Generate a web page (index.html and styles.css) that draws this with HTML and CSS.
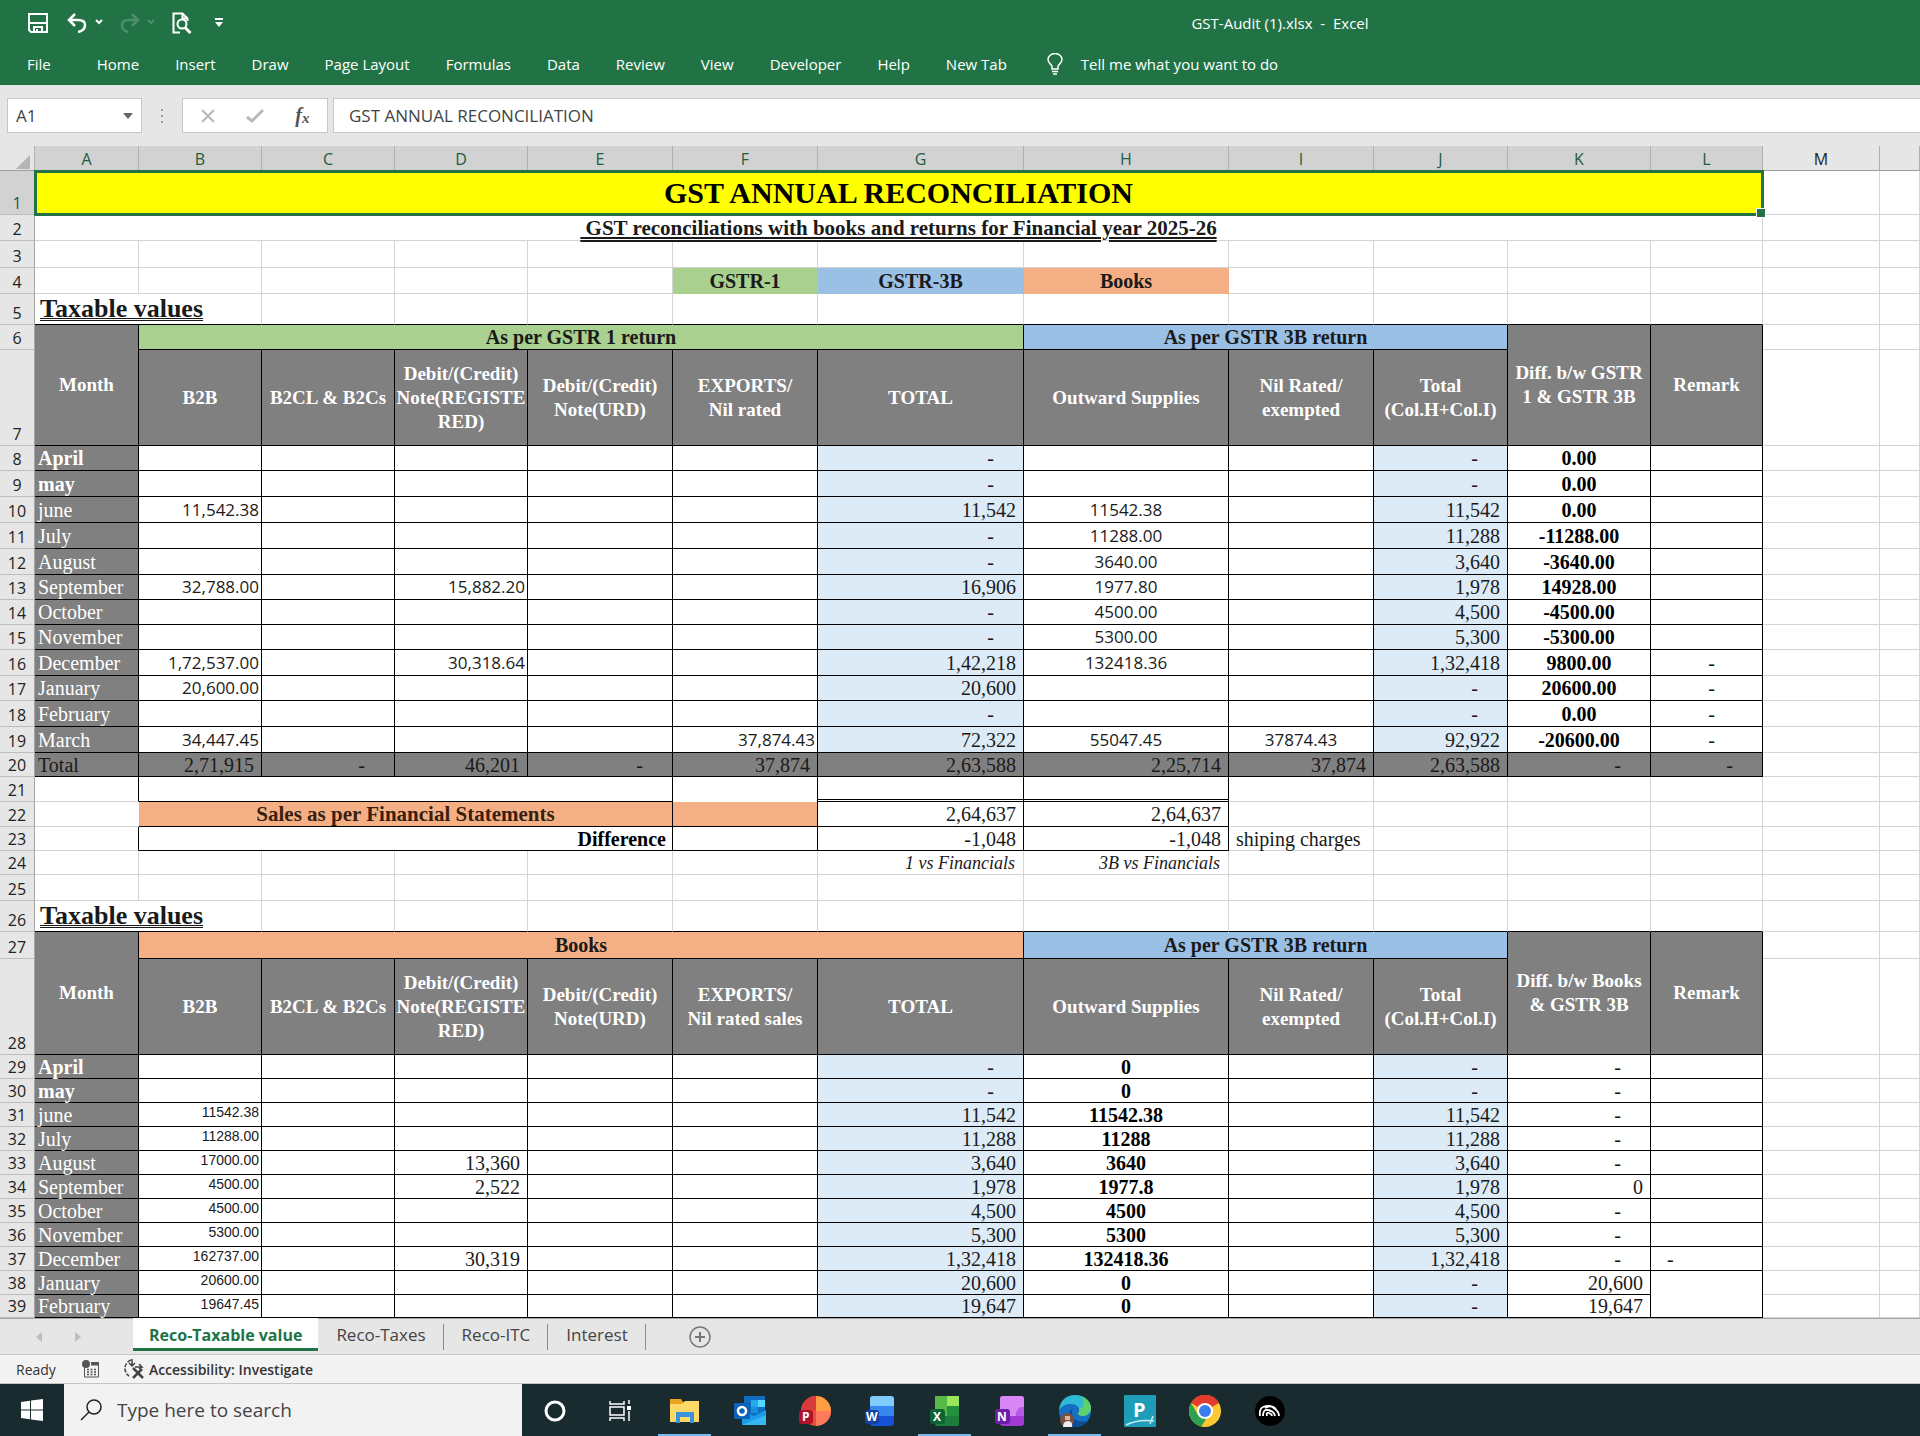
FILE: index.html
```html
<!DOCTYPE html>
<html lang="en">
<head>
    <meta charset="UTF-8">
    <meta name="viewport" content="width=device-width, initial-scale=1.0">
    <title>GST-Audit (1).xlsx - Excel</title>
    <link rel="stylesheet" href="styles.css">
</head>
<body>
    <header class="ribbon">
        <div class="title-bar">
            <div class="quick-access">
                <button class="quick" aria-label="Save">
                    <svg width="20" height="20" viewBox="0 0 20 20" fill="none" stroke="#fff" stroke-width="2"><path d="M1 1h18v18H3L1 17z"/><path d="M2 10h16M6 19v-5h8v5"/><path d="M8 16h2v3H8z" fill="#fff" stroke="none"/></svg>
                </button>
                <button class="quick undo" aria-label="Undo">
                    <svg width="38" height="20" viewBox="0 0 38 20" fill="none" stroke="#fff" stroke-width="2.500"><path d="M8 1L2 7l6 6M2 7h9c5 0 7 2 7 5s-2 6-7 7"/><path d="M29 7l3 3 3-3" stroke-width="2"/></svg>
                </button>
                <button class="quick redo" aria-label="Redo">
                    <svg width="38" height="20" viewBox="0 0 38 20" fill="none" stroke="#4b9069" stroke-width="2.500"><path d="M13 1l6 6-6 6M19 7h-9c-5 0-7 2-7 5s2 6 6 7"/><path d="M29 7l3 3 3-3" stroke-width="2"/></svg>
                </button>
                <button class="quick preview" aria-label="Print preview">
                    <svg width="20" height="22" viewBox="0 0 20 22" fill="none" stroke="#fff" stroke-width="2"><path d="M8 20.500H1.500v-19h9l5 5V9M10.500 1.500v5h5"/><circle cx="10" cy="12" r="4.500"/><path d="M13 15.500l5.500 5.500" stroke-width="3"/></svg>
                </button>
                <button class="quick more" aria-label="Customize Quick Access Toolbar">
                    <svg width="8" height="10" viewBox="0 0 8 10" fill="#fff"><path d="M0 0h8v2H0zM0 4h8L4 9z"/></svg>
                </button>
            </div>
            <div class="file-name">GST-Audit (1).xlsx&nbsp; -&nbsp; Excel</div>
        </div>
        <nav class="menu">
            <a href="#" class="file">File</a>
            <a href="#">Home</a>
            <a href="#">Insert</a>
            <a href="#">Draw</a>
            <a href="#">Page Layout</a>
            <a href="#">Formulas</a>
            <a href="#">Data</a>
            <a href="#">Review</a>
            <a href="#">View</a>
            <a href="#">Developer</a>
            <a href="#">Help</a>
            <a href="#">New Tab</a>
            <a href="#" class="tell-me">
                <svg width="16" height="22" viewBox="0 0 16 22" fill="none" stroke="#fff" stroke-width="1.500"><path d="M5 16v-3C4 11 1 10 1 6.500a7 6 0 0 1 14 0C15 10 12 11 11 13v3zM5 18.500h6M6 21h4"/></svg>
                Tell me what you want to do
            </a>
        </nav>
    </header>

    <div class="formula-bar">
        <div class="name-box">
            <input type="text" value="A1" aria-label="Name box">
            <button aria-label="Open name list"><svg width="10" height="6" viewBox="0 0 10 6" fill="#666"><path d="M0 0h10L5 6z"/></svg></button>
        </div>
        <svg class="dots" width="4" height="14" viewBox="0 0 4 14" fill="#a0a0a0"><path d="M1 0h2v2H1zM1 6h2v2H1zM1 12h2v2H1z"/></svg>
        <div class="formula-buttons">
            <button aria-label="Cancel"><svg width="14" height="14" viewBox="0 0 14 14" stroke="#b9b9b9" stroke-width="2"><path d="M1 1l12 12M13 1L1 13"/></svg></button>
            <button aria-label="Enter"><svg width="18" height="14" viewBox="0 0 18 14" fill="none" stroke="#b9b9b9" stroke-width="3"><path d="M1 8l5 4L17 1"/></svg></button>
            <button class="fx" aria-label="Insert function">f<small>x</small></button>
        </div>
        <input class="formula" type="text" value="GST ANNUAL RECONCILIATION" aria-label="Formula bar">
    </div>

    <main class="sheet">
        <table>
            <colgroup>
                <col class="w-num"><col class="w-a"><col class="w-b"><col class="w-c"><col class="w-d"><col class="w-e"><col class="w-f"><col class="w-g"><col class="w-h"><col class="w-i"><col class="w-j"><col class="w-k"><col class="w-l"><col class="w-m"><col>
            </colgroup>
            <thead>
                <tr><th class="corner"><svg width="14" height="14" viewBox="0 0 14 14" fill="#b4b4b4"><path d="M14 0v14H0z"/></svg></th><th>A</th><th>B</th><th>C</th><th>D</th><th>E</th><th>F</th><th>G</th><th>H</th><th>I</th><th>J</th><th>K</th><th>L</th><th class="off">M</th><th class="off"></th></tr>
            </thead>
            <tbody class="top">
                <tr class="h44"><th class="on">1</th><td colspan="12" class="title">GST ANNUAL RECONCILIATION</td><td></td><td></td></tr>
                <tr class="h26"><th>2</th><td colspan="12" class="subtitle">&nbsp;GST reconciliations with books and returns for Financial year 2025-26</td><td></td><td></td></tr>
                <tr class="h27"><th>3</th><td></td><td></td><td></td><td></td><td></td><td></td><td></td><td></td><td></td><td></td><td></td><td></td><td></td><td></td></tr>
                <tr class="h26"><th>4</th><td></td><td></td><td></td><td></td><td></td><td class="band green">GSTR-1</td><td class="band blue">GSTR-3B</td><td class="band orange">Books</td><td></td><td></td><td></td><td></td><td></td><td></td></tr>
                <tr class="h31 caption"><th>5</th><td colspan="2">Taxable values</td><td></td><td></td><td></td><td></td><td></td><td></td><td></td><td></td><td></td><td></td><td></td><td></td></tr>
            </tbody>
            <tbody class="gstr">
                <tr class="h25"><th>6</th><td rowspan="2" class="head">Month</td><td colspan="6" class="group green">As per GSTR 1 return</td><td colspan="3" class="group blue">As per GSTR 3B return</td><td rowspan="2" class="head">Diff. b/w GSTR<br>1 &amp; GSTR 3B</td><td rowspan="2" class="head">Remark</td><td></td><td></td></tr>
                <tr class="h96"><th>7</th><td class="head">B2B</td><td class="head">B2CL &amp; B2Cs</td><td class="head">Debit/(Credit)<br>Note(REGISTE<br>RED)</td><td class="head">Debit/(Credit)<br>Note(URD)</td><td class="head">EXPORTS/<br>Nil rated</td><td class="head">TOTAL</td><td class="head">Outward Supplies</td><td class="head">Nil Rated/<br>exempted</td><td class="head">Total<br>(Col.H+Col.I)</td><td></td><td></td></tr>
                <tr class="month h25"><th>8</th><td class="bold">April</td><td></td><td></td><td></td><td></td><td></td><td class="dash">-</td><td></td><td></td><td class="dash">-</td><td>0.00</td><td></td><td></td><td></td></tr>
                <tr class="month h26"><th>9</th><td class="bold">may</td><td></td><td></td><td></td><td></td><td></td><td class="dash">-</td><td></td><td></td><td class="dash">-</td><td>0.00</td><td></td><td></td><td></td></tr>
                <tr class="month h26"><th>10</th><td>june</td><td>11,542.38</td><td></td><td></td><td></td><td></td><td>11,542</td><td>11542.38</td><td></td><td>11,542</td><td>0.00</td><td></td><td></td><td></td></tr>
                <tr class="month h26"><th>11</th><td>July</td><td></td><td></td><td></td><td></td><td></td><td class="dash">-</td><td>11288.00</td><td></td><td>11,288</td><td>-11288.00</td><td></td><td></td><td></td></tr>
                <tr class="month h26"><th>12</th><td>August</td><td></td><td></td><td></td><td></td><td></td><td class="dash">-</td><td>3640.00</td><td></td><td>3,640</td><td>-3640.00</td><td></td><td></td><td></td></tr>
                <tr class="month h25"><th>13</th><td>September</td><td>32,788.00</td><td></td><td>15,882.20</td><td></td><td></td><td>16,906</td><td>1977.80</td><td></td><td>1,978</td><td>14928.00</td><td></td><td></td><td></td></tr>
                <tr class="month h25"><th>14</th><td>October</td><td></td><td></td><td></td><td></td><td></td><td class="dash">-</td><td>4500.00</td><td></td><td>4,500</td><td>-4500.00</td><td></td><td></td><td></td></tr>
                <tr class="month h25"><th>15</th><td>November</td><td></td><td></td><td></td><td></td><td></td><td class="dash">-</td><td>5300.00</td><td></td><td>5,300</td><td>-5300.00</td><td></td><td></td><td></td></tr>
                <tr class="month h26"><th>16</th><td>December</td><td>1,72,537.00</td><td></td><td>30,318.64</td><td></td><td></td><td>1,42,218</td><td>132418.36</td><td></td><td>1,32,418</td><td>9800.00</td><td>-</td><td></td><td></td></tr>
                <tr class="month h25"><th>17</th><td>January</td><td>20,600.00</td><td></td><td></td><td></td><td></td><td>20,600</td><td></td><td></td><td class="dash">-</td><td>20600.00</td><td>-</td><td></td><td></td></tr>
                <tr class="month h26"><th>18</th><td>February</td><td></td><td></td><td></td><td></td><td></td><td class="dash">-</td><td></td><td></td><td class="dash">-</td><td>0.00</td><td>-</td><td></td><td></td></tr>
                <tr class="month h26"><th>19</th><td>March</td><td>34,447.45</td><td></td><td></td><td></td><td>37,874.43</td><td>72,322</td><td>55047.45</td><td>37874.43</td><td>92,922</td><td>-20600.00</td><td>-</td><td></td><td></td></tr>
                <tr class="total h24"><th>20</th><td>Total</td><td>2,71,915</td><td class="dash">-</td><td>46,201</td><td class="dash">-</td><td>37,874</td><td>2,63,588</td><td>2,25,714</td><td>37,874</td><td>2,63,588</td><td class="dash">-</td><td class="dash">-</td><td></td><td></td></tr>
            </tbody>
            <tbody class="financials">
                <tr class="h25"><th>21</th><td class="edge"></td><td colspan="4" class="boxed"></td><td class="edge open"></td><td class="edge double"></td><td class="edge double"></td><td></td><td></td><td></td><td></td><td></td><td></td></tr>
                <tr class="h25"><th>22</th><td class="plain"></td><td colspan="4" class="boxed sales orange">Sales as per Financial Statements</td><td class="boxed orange"></td><td class="boxed amount">2,64,637</td><td class="boxed amount">2,64,637</td><td></td><td></td><td></td><td></td><td></td><td></td></tr>
                <tr class="h24"><th>23</th><td class="edge"></td><td colspan="4" class="boxed difference">Difference</td><td class="boxed"></td><td class="boxed amount">-1,048</td><td class="boxed amount">-1,048</td><td class="note">shiping charges</td><td></td><td></td><td></td><td></td><td></td></tr>
                <tr class="h24"><th>24</th><td></td><td></td><td></td><td></td><td></td><td></td><td class="versus">1 vs Financials</td><td class="versus">3B vs Financials</td><td></td><td></td><td></td><td></td><td></td><td></td></tr>
                <tr class="h26"><th>25</th><td></td><td></td><td></td><td></td><td></td><td></td><td></td><td></td><td></td><td></td><td></td><td></td><td></td><td></td></tr>
                <tr class="h31 caption"><th>26</th><td colspan="2">Taxable values</td><td></td><td></td><td></td><td></td><td></td><td></td><td></td><td></td><td></td><td></td><td></td><td></td></tr>
            </tbody>
            <tbody class="books">
                <tr class="h27"><th>27</th><td rowspan="2" class="head">Month</td><td colspan="6" class="group orange">Books</td><td colspan="3" class="group blue">As per GSTR 3B return</td><td rowspan="2" class="head">Diff. b/w Books<br>&amp; GSTR 3B</td><td rowspan="2" class="head">Remark</td><td></td><td></td></tr>
                <tr class="h96"><th>28</th><td class="head">B2B</td><td class="head">B2CL &amp; B2Cs</td><td class="head">Debit/(Credit)<br>Note(REGISTE<br>RED)</td><td class="head">Debit/(Credit)<br>Note(URD)</td><td class="head">EXPORTS/<br>Nil rated sales</td><td class="head">TOTAL</td><td class="head">Outward Supplies</td><td class="head">Nil Rated/<br>exempted</td><td class="head">Total<br>(Col.H+Col.I)</td><td></td><td></td></tr>
                <tr class="month h24"><th>29</th><td class="bold">April</td><td></td><td></td><td></td><td></td><td></td><td class="dash">-</td><td>0</td><td></td><td class="dash">-</td><td class="dash">-</td><td></td><td></td><td></td></tr>
                <tr class="month h24"><th>30</th><td class="bold">may</td><td></td><td></td><td></td><td></td><td></td><td class="dash">-</td><td>0</td><td></td><td class="dash">-</td><td class="dash">-</td><td></td><td></td><td></td></tr>
                <tr class="month h24"><th>31</th><td>june</td><td>11542.38</td><td></td><td></td><td></td><td></td><td>11,542</td><td>11542.38</td><td></td><td>11,542</td><td class="dash">-</td><td></td><td></td><td></td></tr>
                <tr class="month h24"><th>32</th><td>July</td><td>11288.00</td><td></td><td></td><td></td><td></td><td>11,288</td><td>11288</td><td></td><td>11,288</td><td class="dash">-</td><td></td><td></td><td></td></tr>
                <tr class="month h24"><th>33</th><td>August</td><td>17000.00</td><td></td><td>13,360</td><td></td><td></td><td>3,640</td><td>3640</td><td></td><td>3,640</td><td class="dash">-</td><td></td><td></td><td></td></tr>
                <tr class="month h24"><th>34</th><td>September</td><td>4500.00</td><td></td><td>2,522</td><td></td><td></td><td>1,978</td><td>1977.8</td><td></td><td>1,978</td><td>0</td><td></td><td></td><td></td></tr>
                <tr class="month h24"><th>35</th><td>October</td><td>4500.00</td><td></td><td></td><td></td><td></td><td>4,500</td><td>4500</td><td></td><td>4,500</td><td class="dash">-</td><td></td><td></td><td></td></tr>
                <tr class="month h24"><th>36</th><td>November</td><td>5300.00</td><td></td><td></td><td></td><td></td><td>5,300</td><td>5300</td><td></td><td>5,300</td><td class="dash">-</td><td></td><td></td><td></td></tr>
                <tr class="month h24"><th>37</th><td>December</td><td>162737.00</td><td></td><td>30,319</td><td></td><td></td><td>1,32,418</td><td>132418.36</td><td></td><td>1,32,418</td><td class="dash">-</td><td>-</td><td></td><td></td></tr>
                <tr class="month h24"><th>38</th><td>January</td><td>20600.00</td><td></td><td></td><td></td><td></td><td>20,600</td><td>0</td><td></td><td class="dash">-</td><td>20,600</td><td rowspan="2"></td><td></td><td></td></tr>
                <tr class="month last h23"><th>39</th><td>February</td><td>19647.45</td><td></td><td></td><td></td><td></td><td>19,647</td><td>0</td><td></td><td class="dash">-</td><td>19,647</td><td></td><td></td></tr>
            </tbody>
        </table>
    </main>

    <nav class="sheet-tabs">
        <div class="arrows">
            <button aria-label="Previous sheet"><svg width="6" height="10" viewBox="0 0 6 10" fill="#bdbdbd"><path d="M6 0v10L0 5z"/></svg></button>
            <button aria-label="Next sheet"><svg width="6" height="10" viewBox="0 0 6 10" fill="#bdbdbd"><path d="M0 0v10l6-5z"/></svg></button>
        </div>
        <a href="#" class="tab active">Reco-Taxable value</a>
        <a href="#" class="tab">Reco-Taxes</a>
        <a href="#" class="tab">Reco-ITC</a>
        <a href="#" class="tab">Interest</a>
        <button class="add" aria-label="New sheet"><svg width="22" height="22" viewBox="0 0 22 22" fill="none" stroke="#777"><circle cx="11" cy="11" r="10" stroke-width="1.500"/><path d="M11 6v10M6 11h10" stroke-width="2"/></svg></button>
    </nav>

    <div class="status">
        <span class="ready">Ready</span>
        <svg class="macro" width="18" height="18" viewBox="0 0 18 18" fill="none" stroke="#555"><path d="M2.500 7v10h14V2.500H9"/><path d="M9 4h8" stroke-width="3"/><path d="M5 9.500h9M5 12h9M5 14.500h9" stroke-width="1.500" stroke-dasharray="2 1.500"/><circle cx="4" cy="4" r="4" fill="#555" stroke="none"/></svg>
        <svg class="access" width="22" height="20" viewBox="0 0 22 20" fill="none" stroke="#444" stroke-width="1.500"><path d="M8 1a9 9 0 0 0-2 16" stroke-dasharray="4 1.500"/><path d="M9 0v6M6 4l3 3 3-3M12 8h7l-3-3M19 8l-3 2"/><path d="M10 9l10 10M19 10l-9 9" stroke-width="2.500"/></svg>
        <span class="check">Accessibility: Investigate</span>
    </div>

    <footer class="taskbar">
        <button class="start" aria-label="Start"><svg width="22" height="22" viewBox="0 0 22 22" fill="#fff"><path d="M0 3l9-1.300V10.500H0zM10 1.500L22 0v10.500H10zM0 11.500h9v8.800L0 19zM10 11.500h12V22l-12-1.500z"/></svg></button>
        <label class="search">
            <svg width="22" height="22" viewBox="0 0 22 22" fill="none" stroke="#222" stroke-width="1.500"><circle cx="14" cy="8" r="7"/><path d="M9 13l-8 8"/></svg>
            <input type="text" placeholder="Type here to search" aria-label="Search">
        </label>
        <button class="app" aria-label="Cortana"><svg width="22" height="22" viewBox="0 0 22 22"><circle cx="11" cy="11" r="9" fill="none" stroke="#fff" stroke-width="3"/></svg></button>
        <button class="app" aria-label="Task view"><svg width="22" height="22" viewBox="0 0 22 22" fill="none" stroke="#fff" stroke-width="1.500"><path d="M1 1v3h14V1M1 21v-3h14v3M1 7h14v8H1zM20 0v4M20 11v10"/><path d="M18 6h4v4h-4z" fill="#fff" stroke="none"/></svg></button>
        <button class="app open" aria-label="File Explorer"><svg width="30" height="26" viewBox="0 0 30 26"><path d="M0 1h11l2 3h16v20H0z" fill="#e9a51e"/><path d="M0 6h12l3-3h14v21H0z" fill="#ffd968"/><path d="M6 25V14h18v11h-4v-6H10v6z" fill="#3a93dc"/></svg></button>
        <button class="app" aria-label="Outlook"><svg width="32" height="30" viewBox="0 0 32 30"><path d="M10 0h21v20H10z" fill="#0f6cbf"/><path d="M17 4h7v7h-7z" fill="#28a8ea"/><path d="M24 4h7v7h-7z" fill="#50d9ff"/><path d="M17 11h7v6h-7z" fill="#1490df"/><path d="M8 14l12 6 12-6v15H8z" fill="#1c9be8"/><path d="M8 29l24-10v10z" fill="#35b8f1"/><rect y="7" width="16" height="16" rx="1" fill="#0a63b8"/><circle cx="8" cy="15" r="4" fill="none" stroke="#fff" stroke-width="2.500"/></svg></button>
        <button class="app" aria-label="PowerPoint"><svg width="32" height="30" viewBox="0 0 32 30"><circle cx="17" cy="15" r="15" fill="#e8503a"/><path d="M17 0a15 15 0 0 1 15 15H17z" fill="#ff9d42"/><path d="M17 0a15 15 0 0 0-15 15l15-1z" fill="#d93a3a"/><path d="M17 15h15a15 15 0 0 1-15 15z" fill="#ff7a5c"/><rect y="14" width="14" height="14" rx="3" fill="#b3122c"/><text x="3" y="25" class="logo small">P</text></svg></button>
        <button class="app" aria-label="Word"><svg width="30" height="30" viewBox="0 0 30 30"><rect x="5" width="24" height="30" rx="3" fill="#1651d8"/><path d="M5 11V3q0-3 3-3h18q3 0 3 3v8z" fill="#7fcbfb"/><path d="M5 10h24v10H5z" fill="#3688f0"/><rect y="14" width="14" height="14" rx="3" fill="#1440a0"/><text x="1" y="25" class="logo small">W</text></svg></button>
        <button class="app open" aria-label="Excel"><svg width="30" height="30" viewBox="0 0 30 30"><rect x="5" width="24" height="30" rx="2" fill="#1c7d3c"/><path d="M5 0h12v20H5z" fill="#57b947"/><path d="M17 0h12v10H17z" fill="#9be65a"/><path d="M17 10h12v10H17z" fill="#23913d"/><rect y="13" width="15" height="15" rx="3" fill="#0f6236"/><text x="3" y="25" class="logo small">X</text></svg></button>
        <button class="app" aria-label="OneNote"><svg width="30" height="30" viewBox="0 0 30 30"><rect x="5" width="24" height="30" rx="3" fill="#a33ad6"/><path d="M5 20V3q0-3 3-3h18q3 0 3 3v8q-8 0-8 9z" fill="#d987f7"/><path d="M21 20q0-9 8-9v9z" fill="#b65be6"/><rect y="13" width="15" height="15" rx="3" fill="#6e1fa8"/><text x="2" y="25" class="logo small">N</text></svg></button>
        <button class="app open" aria-label="Edge"><svg width="32" height="32" viewBox="0 0 32 32"><circle cx="16" cy="16" r="16" fill="#1470c4"/><path d="M0 15C1 5 8 0 16 0c9 0 16 6 16 13 0 5-4 8-8 8-3 0-5-1-5-3 1-1 2-2 1-5-3-5-14-6-20 2z" fill="#2fb9d6"/><path d="M22 1c6 2 10 7 10 12 0 5-4 8-8 8-3 0-5-1-5-3 1-1 2-2 1-5 6 1 6-8 2-12z" fill="#5fd16c"/><path d="M14 13c-4 8 2 16 15 13-4 5-9 6-13 6-7-2-10-13-2-19z" fill="#0d4b94"/><circle cx="8" cy="25" r="7" fill="#7b5040"/><path d="M6 21h5v4H6z" fill="#d9b59c"/><path d="M4 32q0-6 5-6t4 6z" fill="#eee"/></svg></button>
        <button class="app" aria-label="Publisher"><svg width="32" height="32" viewBox="0 0 32 32"><rect width="32" height="32" rx="1" fill="#1e9cb8"/><text x="9" y="22" class="logo">P</text><path d="M2 30q12-6 28-4M26 29l3-8" fill="none" stroke="#c8f0f5" stroke-width="1.500"/></svg></button>
        <button class="app" aria-label="Chrome"><svg width="32" height="32" viewBox="0 0 32 32"><circle cx="16" cy="16" r="16" fill="#fcc934"/><path d="M16 16L2.100 8A16 16 0 0 1 29.900 8z" fill="#e33b2e"/><path d="M16 8h13.900L26 5z" fill="#e33b2e"/><path d="M2.100 8L9 20l7 4-4 7.500A16 16 0 0 1 2.100 8z" fill="#2da14f"/><path d="M12 31.500L20 20l-8-1-3 1z" fill="#2da14f"/><circle cx="16" cy="16" r="8" fill="#fff"/><circle cx="16" cy="16" r="6" fill="#3b7ded"/></svg></button>
        <button class="app" aria-label="Music"><svg width="30" height="30" viewBox="0 0 30 30"><circle cx="15" cy="15" r="15" fill="#000"/><path d="M5 20q-1-7 3-9 7-3 12 2 4 3 4 7M8 20q0-7 5-6 6 1 7 6M10 12q6-4 11 1M12 20q-1-4 2-3 3 1 3 3" fill="none" stroke="#fff" stroke-width="1.800"/></svg></button>
    </footer>
</body>
</html>
```
FILE: styles.css
```css
* {
    box-sizing: border-box;
}
body {
    margin: 0;
    min-height: 100vh;
    display: flex;
    flex-direction: column;
    background-color: #e6e6e6;
    font-family: "Open Sans", "Noto Sans", sans-serif;
    font-size: 16px;
    color: #222;
}
button {
    padding: 0;
    border: none;
    background: none;
    display: flex;
    align-items: center;
    justify-content: center;
}
a {
    color: inherit;
    text-decoration: none;
}
input {
    border: none;
    outline: none;
    background: none;
    font-family: inherit;
    min-width: 0;
}

/* ribbon */
.ribbon {
    background-color: #217346;
    color: #fff;
    height: 85px;
}
.title-bar {
    display: grid;
    grid-template-columns: 1fr 2fr;
    align-items: center;
    height: 45px;
}
.quick-access {
    display: flex;
    align-items: center;
    padding-left: 28px;
}
.undo {
    margin-left: 19px;
}
.redo {
    margin-left: 14px;
}
.preview {
    margin-left: 15px;
}
.more {
    margin-left: 23px;
}
.file-name {
    text-align: center;
    font-size: 15px;
}
.menu {
    display: flex;
    align-items: center;
    gap: 36px;
    height: 38px;
    padding-left: 27px;
    font-size: 15px;
    white-space: nowrap;
}
.menu .file {
    margin-right: 10px;
}
.tell-me {
    display: flex;
    align-items: center;
    gap: 18px;
    margin-left: 4px;
}

/* formula bar */
.formula-bar {
    display: flex;
    align-items: center;
    height: 61px;
    padding-left: 7px;
}
.name-box,
.formula-buttons,
.formula {
    height: 35px;
    background-color: #fff;
    border: 1px solid #c6c6c6;
}
.name-box {
    display: flex;
    width: 135px;
    padding-right: 8px;
}
.name-box input {
    flex: 1;
    padding: 0 8px;
    font-size: 17px;
    color: #444;
}
.dots {
    margin: 0 18px;
}
.formula-buttons {
    display: flex;
    width: 146px;
    padding: 0 1px;
}
.formula-buttons button {
    flex: 1;
}
.formula-buttons .fx {
    font: italic bold 20px "Liberation Serif", serif;
    color: #555;
}
.fx small {
    font-size: 15px;
    padding-top: 5px;
}
.formula {
    flex: 1;
    margin-left: 5px;
    padding: 0 15px;
    border-right: none;
    font-size: 17px;
    color: #444;
}

/* grid */
.sheet {
    flex: 1;
    background-color: #fff;
    overflow: hidden;
}
table {
    width: 100%;
    table-layout: fixed;
    border-collapse: separate;
    border-spacing: 0;
}
.w-num { width: 35px; }
.w-a { width: 104px; }
.w-b { width: 123px; }
.w-c { width: 133px; }
.w-d { width: 133px; }
.w-e { width: 145px; }
.w-f { width: 145px; }
.w-g { width: 206px; }
.w-h { width: 205px; }
.w-i { width: 145px; }
.w-j { width: 134px; }
.w-k { width: 143px; }
.w-l { width: 112px; }
.w-m { width: 117px; }

th {
    padding: 0;
    background-color: #e6e6e6;
    border-right: 1px solid #a6a6a6;
    border-bottom: 1px solid #bdbdbd;
    font-weight: normal;
    line-height: 22px;
    vertical-align: bottom;
}
td {
    padding: 0;
    border-right: 1px solid #d4d4d4;
    border-bottom: 1px solid #d4d4d4;
    font-family: "Liberation Serif", serif;
    font-size: 20px;
    line-height: 22px;
    white-space: nowrap;
    color: #1a1a1a;
}
thead th {
    height: 25px;
    background-color: #d2d2d2;
    border-right-color: #b0b0b0;
    border-bottom-color: #9c9c9c;
    color: #215c3d;
}
thead .off {
    background-color: #e6e6e6;
    color: #222;
}
thead .corner {
    background-color: #e6e6e6;
    padding-right: 4px;
    text-align: right;
    line-height: 14px;
}
.on {
    background-color: #d2d2d2;
    color: #215c3d;
}
.h23 > * { height: 23px; }
.h24 > * { height: 24px; }
.h25 > * { height: 25px; }
.h26 > * { height: 26px; }
.h27 > * { height: 27px; }
.h31 > * { height: 31px; }
.h44 > * { height: 44px; }
.h96 > * { height: 96px; }

.green { background-color: #a9d08e; }
.blue { background-color: #9bc0e6; }
.orange { background-color: #f4b084; }

.title {
    position: relative;
    background-color: #ffff00;
    outline: 3px solid #217346;
    outline-offset: -2px;
    text-align: center;
    font-size: 30px;
    font-weight: bold;
    line-height: 36px;
    color: #000;
}
.title::after {
    content: "";
    position: absolute;
    right: -4px;
    bottom: -4px;
    width: 8px;
    height: 8px;
    background-color: #217346;
    border: 1px solid #fff;
}
.subtitle {
    text-align: center;
    font-size: 21px;
    font-weight: bold;
    text-decoration: underline double;
}
.band {
    border-color: transparent;
    text-align: center;
    font-weight: bold;
}
.caption td {
    border-bottom-color: #000;
}
.caption td:nth-last-child(-n+2) {
    border-bottom-color: #d4d4d4;
}
.caption td[colspan] {
    padding-left: 5px;
    font-size: 26px;
    font-weight: bold;
    line-height: 30px;
    text-decoration: underline double;
    text-decoration-thickness: 1px;
}
.head,
.group {
    border-color: #000;
    text-align: center;
    font-weight: bold;
}
.head {
    background-color: #808080;
    color: #fff;
    font-size: 19px;
    line-height: 24px;
}

/* month rows: black box round every cell but the last two */
.month td,
.total td {
    border-color: #000;
}
.month td:nth-last-child(-n+2),
.total td:nth-last-child(-n+2) {
    border-color: #d4d4d4;
}
.month td:nth-child(2) {
    background-color: #808080;
    padding-left: 3px;
    color: #fff;
}
.month .bold {
    font-weight: bold;
}
.month td:nth-child(8),
.month td:nth-child(11) {
    background-color: #ddebf7;
    padding-right: 7px;
    text-align: right;
}
.gstr .month td:nth-child(n+3):nth-child(-n+7) {
    font-family: "Open Sans", "Noto Sans", sans-serif;
    font-size: 17px;
    padding-right: 2px;
    text-align: right;
}
.gstr .month td:nth-child(9),
.gstr .month td:nth-child(10) {
    font-family: "Open Sans", "Noto Sans", sans-serif;
    font-size: 17px;
    text-align: center;
}
.gstr .month td:nth-child(12) {
    font-weight: bold;
    text-align: center;
    color: #000;
}
.gstr .month td:nth-child(13) {
    padding-left: 10px;
    text-align: center;
}
.total td {
    background-color: #808080;
    padding-right: 7px;
    text-align: right;
}
.total td:nth-child(2) {
    padding-left: 3px;
    text-align: left;
}
.total td:nth-last-child(-n+2) {
    background-color: #fff;
}
.books .month td:nth-child(3) {
    font-family: "Liberation Sans", sans-serif;
    font-size: 14px;
    line-height: 18px;
    padding-right: 2px;
    text-align: right;
    vertical-align: top;
}
.books .month td:nth-child(5),
.books .month td:nth-child(12) {
    padding-right: 7px;
    text-align: right;
}
.books .month td:nth-child(9) {
    font-weight: bold;
    text-align: center;
    color: #000;
}
.books .month td:nth-child(13) {
    padding-left: 16px;
}
.month td.dash:nth-child(n),
.total td.dash:nth-child(n) {
    padding-right: 29px;
}
.books .month td.dash:nth-child(12) {
    padding-right: 29px;
}
.books .last td:nth-child(13) {
    padding-left: 0;
}

/* sales and difference box */
.edge {
    border-right-color: #000;
}
.open {
    border-bottom: none;
}
.double {
    border-bottom: 3px double #000;
}
.plain {
    border-right: none;
}
.boxed {
    border-color: #000;
}
.sales {
    text-align: center;
    font-size: 21px;
    font-weight: bold;
    color: #3a1f10;
}
.difference {
    padding-right: 6px;
    text-align: right;
    font-weight: bold;
    color: #000;
}
.amount {
    padding-right: 7px;
    text-align: right;
}
.note {
    padding-left: 7px;
}
.versus {
    padding-right: 8px;
    text-align: right;
    font-size: 18px;
    font-style: italic;
}

/* sheet tabs */
.sheet-tabs {
    display: flex;
    height: 37px;
    border-bottom: 1px solid #c6c6c6;
    font-size: 17px;
    color: #444;
    white-space: nowrap;
}
.arrows {
    display: flex;
    gap: 33px;
    width: 133px;
    padding-left: 36px;
    border-top: 1px solid #a6a6a6;
}
.tab {
    height: 33px;
    padding: 0 18px;
    line-height: 32px;
    border-top: 1px solid #a6a6a6;
    position: relative;
}
.tab.active {
    background-color: #fff;
    border-top-color: #fff;
    border-bottom: 3px solid #217346;
    padding: 0 16px;
    font-size: 16px;
    color: #217346;
    font-weight: bold;
}
.tab:not(.active)::after {
    content: "";
    position: absolute;
    right: 0;
    top: 5px;
    height: 26px;
    border-right: 1px solid #8c8c8c;
}
.add {
    flex: 1;
    justify-content: flex-start;
    padding-left: 43px;
    border-top: 1px solid #a6a6a6;
}

/* status bar */
.status {
    display: flex;
    align-items: center;
    height: 29px;
    padding-left: 16px;
    background-color: #f3f3f3;
    border-bottom: 1px solid #c6c6c6;
    font-size: 14px;
    color: #333;
}
.macro {
    margin-left: 26px;
}
.access {
    margin-left: 23px;
}
.check {
    margin-left: 4px;
    font-weight: 600;
}

/* taskbar */
.taskbar {
    display: flex;
    height: 52px;
    background-color: #1a2b30;
}
.start {
    width: 64px;
}
.search {
    display: flex;
    align-items: center;
    gap: 15px;
    width: 458px;
    padding-left: 16px;
    background-color: #f2f2f2;
}
.search input {
    flex: 1;
    padding: 0;
    font-size: 19px;
}
.search input::placeholder {
    color: #444;
    opacity: 1;
}
.app {
    width: 65px;
    padding-top: 4px;
    border-bottom: 2px solid transparent;
}
.app.open {
    background: linear-gradient(#76b9ed, #76b9ed) no-repeat center bottom / 53px 2px border-box;
}
.logo {
    fill: #fff;
    font-family: "Open Sans", sans-serif;
    font-size: 20px;
    font-weight: bold;
}
.logo.small {
    font-size: 12px;
}
```
